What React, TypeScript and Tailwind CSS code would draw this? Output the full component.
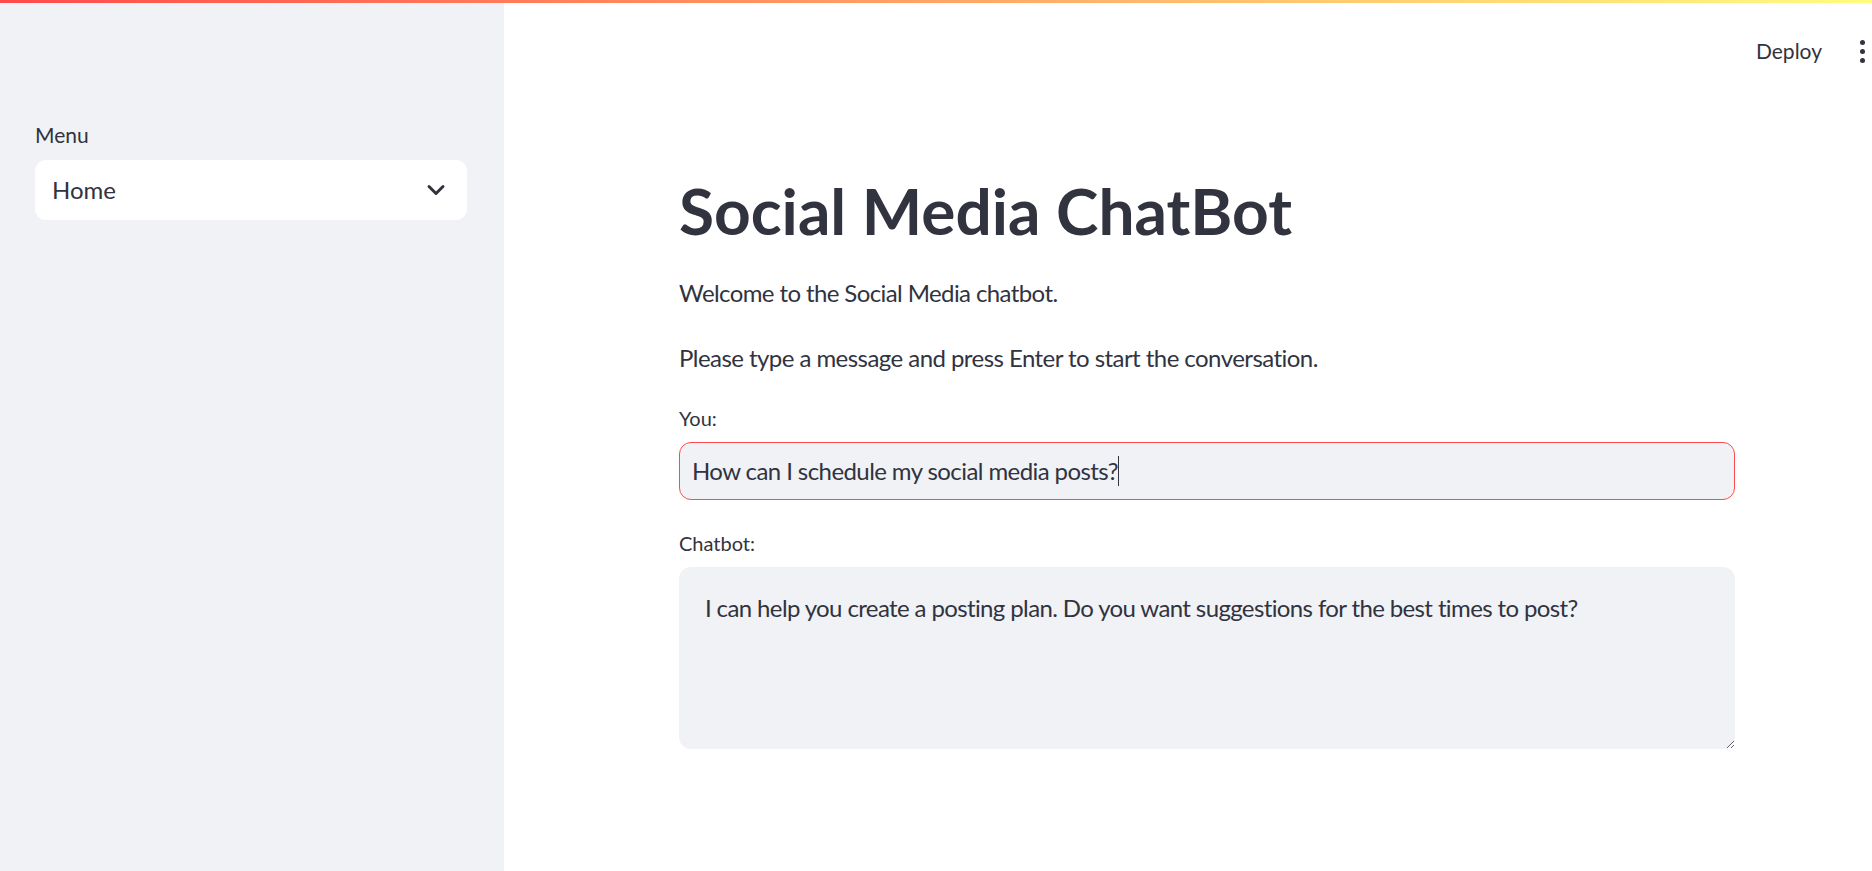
const FONT = { fontFamily: 'Lato, "Noto Sans", sans-serif' };

function Chevron() {
  return (
    <svg width="20" height="14" viewBox="0 0 20 14" fill="none" className="shrink-0">
      <path d="M3 3.5 L10 10.5 L17 3.5" stroke="#31333f" strokeWidth="3" strokeLinecap="round" strokeLinejoin="round" />
    </svg>
  );
}

function Kebab() {
  return (
    <div className="flex flex-col items-center gap-[4px] pt-[2px]">
      <span className="block w-[5px] h-[5px] rounded-full bg-[#31333f]" />
      <span className="block w-[5px] h-[5px] rounded-full bg-[#31333f]" />
      <span className="block w-[5px] h-[5px] rounded-full bg-[#31333f]" />
    </div>
  );
}

export default function App() {
  return (
    <div style={FONT} className="relative flex h-[871px] w-full overflow-hidden bg-white text-[#31333f]">
      {/* streamlit decoration bar */}
      <div className="absolute top-0 left-0 right-0 h-[3px] z-10 bg-[linear-gradient(90deg,#ff4b4b,#fffd80)]" />

      {/* Sidebar */}
      <aside className="w-[504px] shrink-0 bg-[#f0f2f6] pl-[35px] pr-[37px] pt-[122px]">
        <div className="text-[21px] leading-[1.2]">Menu</div>
        <div className="mt-[13px] h-[60px] rounded-[11px] bg-white flex items-center justify-between pl-[17px] pr-[21px]">
          <span className="text-[24px] leading-[1.2]">Home</span>
          <Chevron />
        </div>
      </aside>

      {/* Main */}
      <main className="relative flex-1">
        <header className="absolute top-0 right-0 flex items-start gap-[38px] pt-[38px] pr-[7px]">
          <span className="text-[21px] leading-[1.2]">Deploy</span>
          <Kebab />
        </header>

        <div className="ml-[175px] w-[1056px] pt-[173px]">
          <h1 className="text-[64px] font-bold leading-[1.2]">Social Media ChatBot</h1>
          <p className="mt-[29px] text-[24px] leading-[1.2] tracking-[-0.6px]">Welcome to the Social Media chatbot.</p>
          <p className="mt-[36px] text-[24px] leading-[1.2] tracking-[-0.55px]">
            Please type a message and press Enter to start the conversation.
          </p>

          <div className="mt-[34px] text-[20px] leading-[1.2]">You:</div>
          <div className="mt-[12px] h-[58px] rounded-[12px] border border-[#ff4b4b] bg-[#f0f2f6] flex items-center pl-[12px]">
            <span className="text-[24px] leading-[1.2] tracking-[-0.58px]">How can I schedule my social media posts?</span>
            <span className="block w-px h-[30px] bg-[#31333f]" />
          </div>

          <div className="mt-[31px] text-[20px] leading-[1.2]">Chatbot:</div>
          <textarea
            readOnly
            value="I can help you create a posting plan. Do you want suggestions for the best times to post?"
            style={FONT}
            className="mt-[12px] block w-full h-[182px] rounded-[12px] bg-[#f0f2f6] pl-[26px] pr-[20px] pt-[27px] text-[24px] leading-[1.2] tracking-[-0.62px] text-[#31333f] outline-none resize-y"
          />
        </div>
      </main>
    </div>
  );
}
